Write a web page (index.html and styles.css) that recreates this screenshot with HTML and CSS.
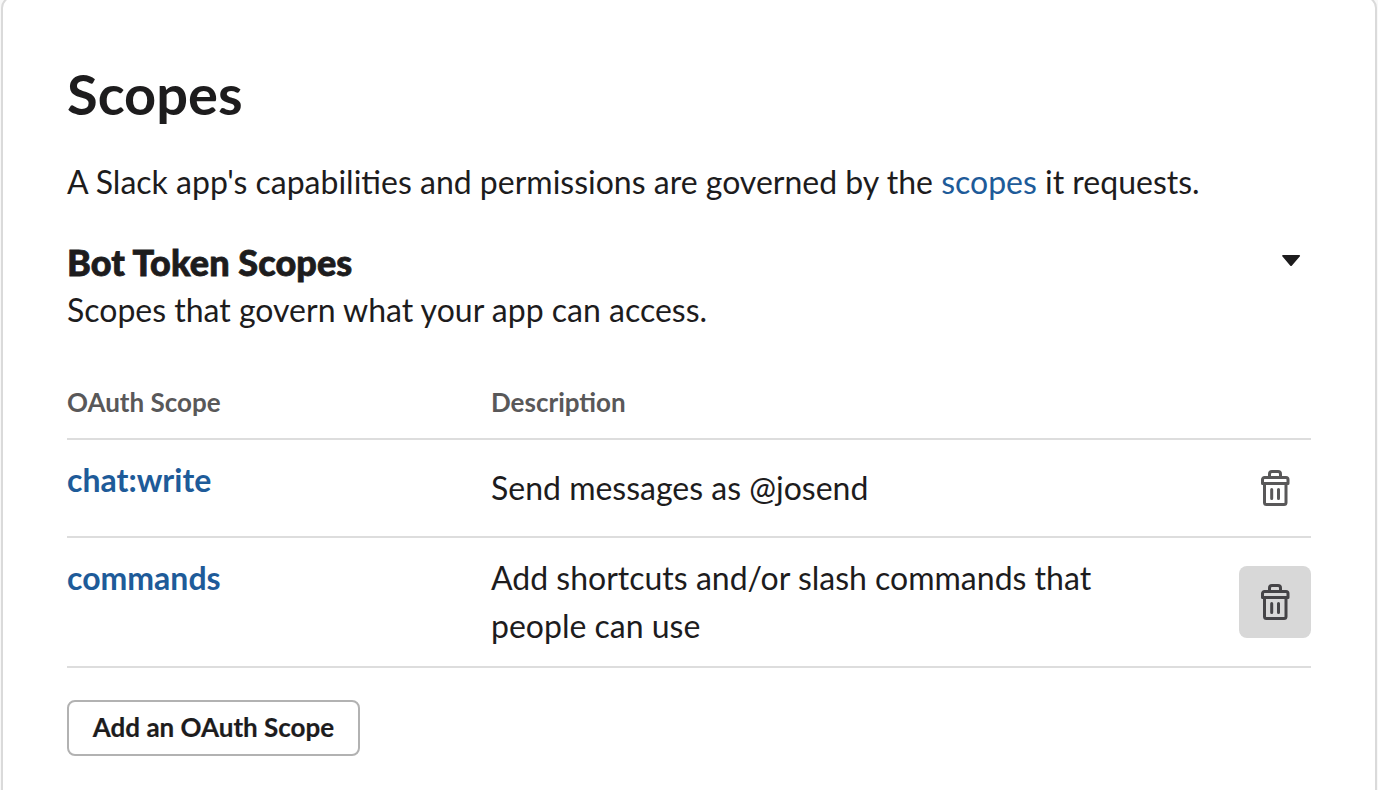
FILE: index.html
```html
<!DOCTYPE html>
<html lang="en">
<head>
<meta charset="utf-8">
<title>Scopes</title>
<link rel="stylesheet" href="styles.css">
</head>
<body>
<main class="card">
  <h1 class="title">Scopes</h1>
  <p class="intro">A Slack app's capabilities and permissions are governed by the <a href="#">scopes</a> it requests.</p>
  <header class="section-head">
    <div>
      <h2 class="subtitle">Bot Token Scopes</h2>
      <p class="hint">Scopes that govern what your app can access.</p>
    </div>
    <svg class="caret" width="20" height="12" viewBox="0 0 20 12"><path d="M2.200 0h15.800a.9.900 0 0 1 .7 1.600l-7.700 8.800a1.300 1.300 0 0 1-1.900 0L1.500 1.600A.9.900 0 0 1 2.200 0z"/></svg>
  </header>
  <section class="table">
    <div class="row head"><span>OAuth Scope</span><span>Description</span></div>
    <div class="row first">
      <a class="scope" href="#">chat:write</a>
      <span class="desc">Send messages as @josend</span>
      <button class="trash" aria-label="Delete"><svg width="30" height="38" viewBox="0 0 30 38"><path d="M9.500 8V5a2.500 2.500 0 0 1 2.500-2.500h6A2.500 2.500 0 0 1 20.500 5v3M4.500 8.500h21.500a2 2 0 0 1 2 2v4H2.500v-4a2 2 0 0 1 2-2zM4.500 15v18.500a2 2 0 0 0 2 2h17.500a2 2 0 0 0 2-2V15M11.700 20.500v9M18.500 20.500v9"/></svg></button>
    </div>
    <div class="row second">
      <a class="scope" href="#">commands</a>
      <span class="desc">Add shortcuts and/or slash commands that people can use</span>
      <button class="trash active" aria-label="Delete"><svg width="30" height="38" viewBox="0 0 30 38"><path d="M9.500 8V5a2.500 2.500 0 0 1 2.500-2.500h6A2.500 2.500 0 0 1 20.500 5v3M4.500 8.500h21.500a2 2 0 0 1 2 2v4H2.500v-4a2 2 0 0 1 2-2zM4.500 15v18.500a2 2 0 0 0 2 2h17.500a2 2 0 0 0 2-2V15M11.700 20.500v9M18.500 20.500v9"/></svg></button>
    </div>
  </section>
  <button class="add">Add an OAuth Scope</button>
</main>
</body>
</html>
```
FILE: styles.css
```css
* { box-sizing: border-box; }
body { margin: 0; height: 790px; overflow: hidden; background: #f8f8f8; color: #1d1c1d; font-family: Lato, sans-serif; font-size: 32px; line-height: 48px; }
h1, h2, p { margin: 0; }
a { color: #1e5b99; text-decoration: none; }
button { font-family: inherit; }
.card { margin: -4px 1px 0; height: 820px; padding: 64px 64px 0; border: 2px solid #dadada; border-radius: 12px; background: #fff; }
.title { font-size: 56px; line-height: 64px; font-weight: 700; }
.intro { margin-top: 32px; }
.section-head { display: flex; justify-content: space-between; margin-top: 32px; }
.subtitle { font-size: 36px; line-height: 48px; font-weight: 900; letter-spacing: .1px; -webkit-text-stroke: .8px currentColor; }
.caret { margin: 17px 10px 0 0; fill: #1d1c1d; }
.table { margin-top: 52px; }
.row { display: grid; grid-template-columns: 424px 624px 1fr; border-bottom: 2px solid #ddd; }
.head { height: 54px; font-size: 26px; line-height: 32px; font-weight: 700; color: #595859; }
.first { height: 98px; padding-top: 12px; }
.second { height: 130px; padding-top: 12px; }
.scope { font-weight: 700; padding-top: 4px; }
.first .desc { padding-top: 12px; }
.second .desc { padding-top: 4px; }
.trash { justify-self: end; width: 72px; height: 72px; padding: 0; border: 0; border-radius: 8px; background: none; color: #595859; display: grid; place-items: center; }
.second .trash { margin-top: 16px; }
.trash svg { fill: none; stroke: currentColor; stroke-width: 3; stroke-linecap: round; stroke-linejoin: round; }
.trash.active { background: #d8d8d8; color: #454447; }
.add { display: block; margin-top: 32px; width: 293px; height: 56px; padding: 0 0 2px; border: 2px solid #b2b2b2; border-radius: 8px; background: #fff; color: #1d1c1d; font-size: 26px; font-weight: 700; -webkit-text-stroke: .2px currentColor; }
```
